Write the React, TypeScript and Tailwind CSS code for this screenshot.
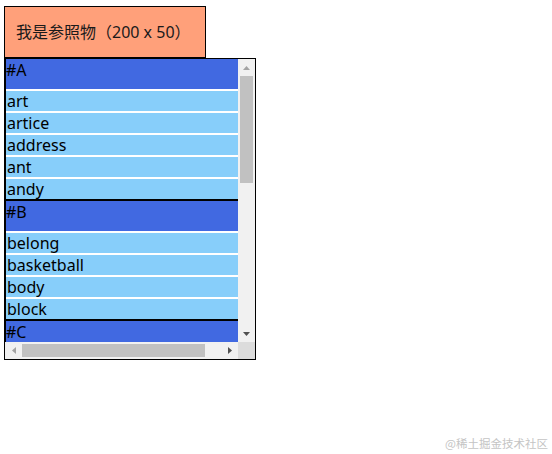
import React from 'react';

const sections = [
  { key: 'A', items: ['art', 'artice', 'address', 'ant', 'andy'] },
  { key: 'B', items: ['belong', 'basketball', 'body', 'block'] },
  { key: 'C', items: [] as string[] },
];

const Arrow = ({ dir, dark }: { dir: 'up' | 'down' | 'left' | 'right'; dark?: boolean }) => {
  const fill = dark ? '#505050' : '#a3a3a3';
  const pts = {
    up: '0,4 3.5,0 7,4',
    down: '0,0 7,0 3.5,4',
    left: '4,0 4,7 0,3.5',
    right: '0,0 4,3.5 0,7',
  }[dir];
  const vertical = dir === 'up' || dir === 'down';
  return (
    <svg width={vertical ? 7 : 4} height={vertical ? 4 : 7} viewBox={vertical ? '0 0 7 4' : '0 0 4 7'}>
      <polygon points={pts} fill={fill} />
    </svg>
  );
};

export default function App() {
  return (
    <div className="relative min-h-[454px] bg-white text-black" style={{ fontFamily: '"Noto Sans", "Noto Sans CJK SC", sans-serif' }}>
      <div className="pt-[6px] pl-[4px]">
        <div className="w-[202px] h-[52px] border border-black bg-[#ffa07a] pl-[11px] text-[16px] leading-[50px] text-[#1a1a1a]">
          我是参照物（200 x 50）
        </div>

        <div className="w-[252px] h-[302px] border border-black grid grid-cols-[1fr_17px] grid-rows-[1fr_17px]">
          <div className="overflow-hidden border-l border-black text-[16px]">
            {sections.map((s, i) => (
              <div key={s.key} className={i > 0 ? 'border-t-2 border-black' : ''}>
                <div className="h-[30px] leading-[23px] bg-[#4169e1]">#{s.key}</div>
                {s.items.map((it) => (
                  <div key={it} className="mt-[2px] h-[20px] leading-[21px] pl-[1px] bg-[#87cefa] whitespace-nowrap">
                    {it}
                  </div>
                ))}
              </div>
            ))}
          </div>

          <div className="flex flex-col bg-[#f1f1f1]">
            <div className="h-[17px] flex items-center justify-center">
              <Arrow dir="up" />
            </div>
            <div className="flex-1 px-[2px]">
              <div className="h-[107px] bg-[#c1c1c1]" />
            </div>
            <div className="h-[17px] flex items-center justify-center">
              <Arrow dir="down" dark />
            </div>
          </div>

          <div className="flex bg-[#f1f1f1]">
            <div className="w-[17px] flex items-center justify-center">
              <Arrow dir="left" />
            </div>
            <div className="flex-1 py-[2px]">
              <div className="w-[183px] h-full bg-[#c1c1c1]" />
            </div>
            <div className="w-[17px] flex items-center justify-center">
              <Arrow dir="right" dark />
            </div>
          </div>

          <div className="bg-[#dcdcdc]" />
        </div>
      </div>

      <div className="absolute right-[4px] bottom-[5px] text-[11.5px] leading-none text-[#c4c4c4]" style={{ fontFamily: '"Noto Sans CJK SC", sans-serif' }}>
        @稀土掘金技术社区
      </div>
    </div>
  );
}
